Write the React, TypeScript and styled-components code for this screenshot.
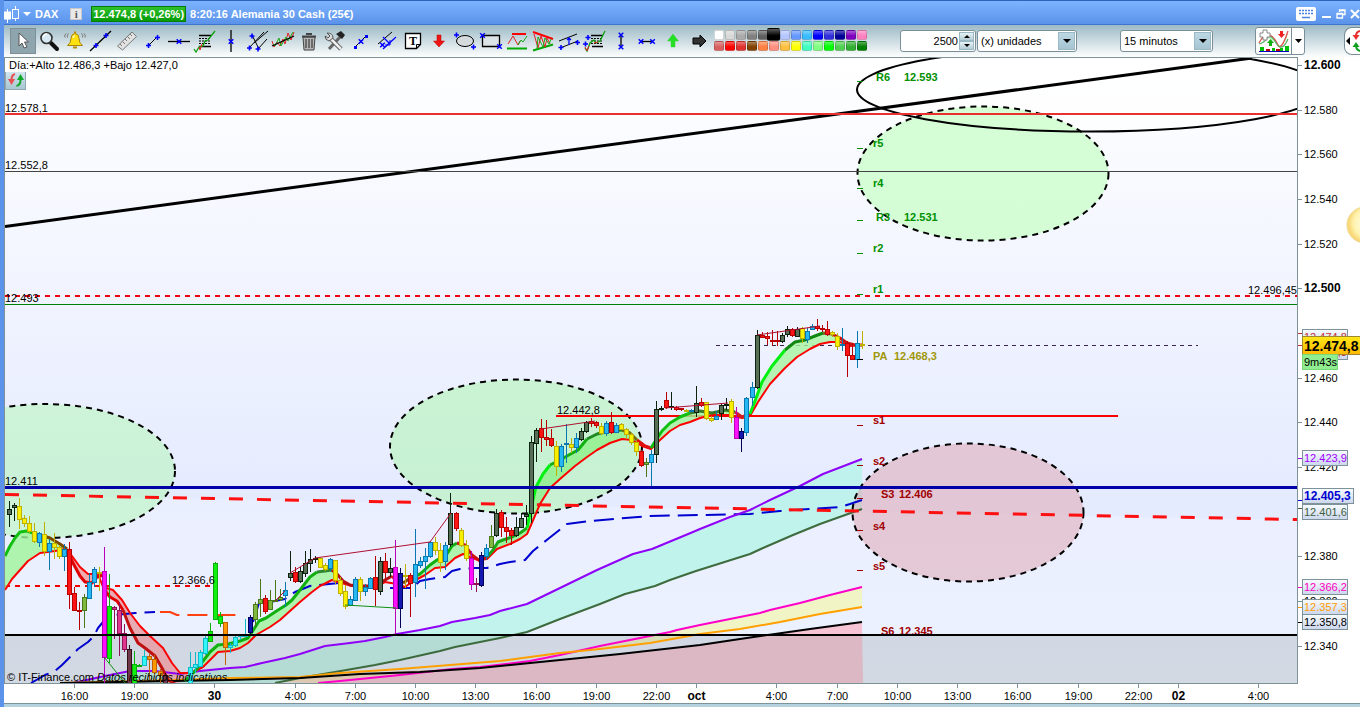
import React from "react";
import styled, { createGlobalStyle } from "styled-components";

const GlobalStyle = createGlobalStyle`
  *, *::before, *::after { box-sizing: border-box; }
  body { margin: 0; background: #fff; font-family: "Liberation Sans", Arial, sans-serif; font-size: 11px; color: #000; }
  button, input, select { font: inherit; color: inherit; }
`;

/* ---------- window frame ---------- */

const Window = styled.main`
  display: flex;
  flex-direction: column;
  min-height: 100vh;
  border-left: 4px solid #5b93ea;
  overflow: hidden;
  background: #fff;
`;

const TitleBar = styled.header`
  display: flex;
  align-items: center;
  height: 25px;
  padding: 2px 0 0;
  border-top: 1px solid #2f62bd;
  border-bottom: 1px solid #3d74cf;
  background: linear-gradient(#7db4ff, #5a92ea);
  color: #fff;
  font-weight: bold;
`;

const TitleMenu = styled.button`
  display: flex;
  align-items: center;
  gap: 4px;
  padding: 0;
  border: 0;
  background: none;
  font-weight: bold;
`;

const InfoButton = styled.button`
  width: 12px;
  height: 12px;
  margin: 0 9px 0 12px;
  padding: 0;
  border: 1px solid #c9c9c9;
  background: #e9e9e9;
  color: #555;
  font: bold 11px/10px "Liberation Serif", serif;
`;

const Quote = styled.span`
  height: 16px;
  padding: 0 1px;
  border: 1px solid #067d06;
  background: linear-gradient(#2fc02f, #059a05);
  line-height: 14px;
`;

const Instrument = styled.span`
  margin-left: 4px;
  flex: 1;
`;

const WindowButtons = styled.div`
  display: flex;
  align-items: center;
  gap: 4px;
`;

const WindowButton = styled.button`
  display: flex;
  padding: 0;
  border: 0;
  background: none;
`;

/* ---------- toolbar ---------- */

const Toolbar = styled.div`
  display: flex;
  align-items: center;
  height: 32px;
  padding-left: 6px;
  background: linear-gradient(#9dbac6, #c3d5dc 40%, #fbfdfd 98%);
`;

const ToolButton = styled.button<{ $active?: boolean }>`
  display: flex;
  align-items: center;
  justify-content: center;
  flex: none;
  width: 26px;
  height: 26px;
  padding: 0;
  border: ${(p) => (p.$active ? "1px solid #7d8f97" : "0")};
  background: ${(p) => (p.$active ? "#8fa5ae" : "none")};
`;

const Palette = styled.div`
  display: grid;
  grid-template-columns: repeat(14, 11px);
  grid-auto-rows: 11px;
  width: 154px;
  margin-left: 2px;
`;

const Swatch = styled.button<{ $color: string; $selected?: boolean }>`
  width: ${(p) => (p.$selected ? 13 : 10)}px;
  height: ${(p) => (p.$selected ? 13 : 10)}px;
  margin: ${(p) => (p.$selected ? "-2px" : "0")};
  padding: 0;
  border: 1px solid rgba(0, 0, 0, 0.16);
  border-radius: 2px;
  background: linear-gradient(rgba(255, 255, 255, 0.35), rgba(255, 255, 255, 0) 60%), ${(p) => p.$color};
`;

const Field = styled.label<{ $width: number; $gap: number }>`
  display: flex;
  align-items: center;
  flex: none;
  width: ${(p) => p.$width}px;
  height: 22px;
  margin-left: ${(p) => p.$gap}px;
  padding: 1px;
  border: 1px solid #7a8f99;
  border-radius: 3px;
  background: #fff;
`;

const CountInput = styled.input`
  flex: 1;
  min-width: 0;
  padding: 0 1px;
  border: 0;
  outline: 0;
  background: none;
  text-align: right;
`;

const Spinner = styled.span`
  display: flex;
  flex-direction: column;
  width: 15px;
  height: 18px;
`;

const SpinButton = styled.button`
  display: flex;
  align-items: center;
  justify-content: center;
  height: 9px;
  padding: 0;
  border: 1px solid #9bb8c5;
  background: linear-gradient(#e8f2f6, #b4ccd6);
`;

const Dropdown = styled.select`
  flex: 1;
  min-width: 0;
  padding: 0 2px;
  border: 0;
  outline: 0;
  appearance: none;
  background: none;
`;

const DropMark = styled.span`
  display: flex;
  align-items: center;
  justify-content: center;
  width: 17px;
  height: 18px;
  background: linear-gradient(#bcd8e4, #a6c4d2);
  border: 1px solid #9bb8c5;
`;

const IndicatorGroup = styled.div`
  display: flex;
  flex: none;
  width: 50px;
  height: 28px;
  margin-left: 42px;
  border: 1px solid #7a8f99;
  border-radius: 3px;
  background: #fff;
`;

const IndicatorButton = styled.button<{ $width: number }>`
  display: flex;
  align-items: center;
  justify-content: center;
  width: ${(p) => p.$width}px;
  padding: 0;
  border: 0;
  background: none;
  & + & { border-left: 1px solid #7a8f99; }
`;

const SidePanelButton = styled.button`
  display: flex;
  align-items: center;
  flex: none;
  width: 16px;
  height: 28px;
  margin-left: auto;
  padding: 0;
  border: 1px solid #7a8f99;
  border-right: 0;
  border-radius: 8px 0 0 8px;
  background: #fff;
`;

/* ---------- chart ---------- */

const ChartPanel = styled.section`
  position: relative;
  flex: 1;
`;

const ChartSvg = styled.svg`
  display: block;
  width: 100%;
  height: auto;
  font-family: "Liberation Sans", Arial, sans-serif;
  font-size: 11px;
`;

const DayRange = styled.div`
  position: absolute;
  top: 2px;
  left: 5px;
  line-height: 13px;
`;

const RefreshButton = styled.button`
  position: absolute;
  top: 15px;
  left: 1px;
  width: 21px;
  height: 18px;
  padding: 0;
  border: 1px solid #8fa9b3;
  border-top: 0;
  background: linear-gradient(#d3e6ee, #a9c6d2);
`;

const StatusEdge = styled.footer`
  height: 4px;
  border-top: 1px solid #7d9299;
  background: #b4d2dd;
`;

/* ---------- tool icons ---------- */

const BLUE = "#0000ff";
const Plus = ({ x, y }: { x: number; y: number }) => (
  <path d={`M${x - 2.5} ${y}h5M${x} ${y - 2.5}v5`} stroke={BLUE} strokeWidth="1.6" />
);
const Cross = ({ x, y }: { x: number; y: number }) => (
  <path d={`M${x - 2.3} ${y - 2.3}l4.600 4.600M${x + 2.3} ${y - 2.3}l-4.600 4.600`} stroke={BLUE} strokeWidth="1.5" />
);

const tools: { name: string; icon: React.ReactNode }[] = [
  { name: "Cursor", icon: <path d="M8 4v13l3-3 2 5 3-1-2.500-5h4z" fill="#fff" stroke="#555" /> },
  {
    name: "Zoom",
    icon: (
      <>
        <path d="M14 14l6 6" stroke="#111" strokeWidth="4" strokeLinecap="round" />
        <circle cx="9.500" cy="9" r="5.500" fill="#d7e9f2" stroke="#333" strokeWidth="1.600" />
        <path d="M6 8q1-3 4-3" stroke="#fff" strokeWidth="1.500" fill="none" />
      </>
    ),
  },
  {
    name: "Alert",
    icon: (
      <>
        <path d="M4.500 16.500Q8 14 8 9.500 8 5 12 4.500 16 5 16 9.500 16 14 19.500 16.500z" fill="#ffe010" stroke="#a88400" />
        <path d="M10 9q0-2 2-2.500" stroke="#fff8b0" strokeWidth="1.500" />
        <path d="M10 18.500h4M11 3.500h2" stroke="#b78c00" strokeWidth="2" />
        <path d="M5.500 4.500q-2 2-1 4M3 4.500q-2 1.500-1 4M18.500 4.500q2 2 1 4M21 4.500q2 1.500 1 4" stroke="#777" />
      </>
    ),
  },
  { name: "Trend line", icon: <><path d="M1 22L22 2" stroke="#000" strokeWidth="1.300" /><Plus x={7} y={16.500} /><Plus x={17} y={6.500} /></> },
  {
    name: "Ruler",
    icon: (
      <>
        <path d="M2.500 17L17 3l4.500 4.500L7.500 21z" fill="#e2e2e2" stroke="#777" />
        <path d="M5 15l2 2M7.500 12.500l2.500 2.500M10 10l2 2M12.500 7.500l2.500 2.500M15 5l2 2" stroke="#777" />
      </>
    ),
  },
  { name: "Segment", icon: <><path d="M8 16l8-8" stroke="#000" /><Plus x={7.500} y={16.500} /><Plus x={16.500} y={8.500} /></> },
  { name: "Horizontal line", icon: <><path d="M1 12.500h22" stroke="#000" strokeWidth="1.300" /><Cross x={12} y={12.500} /></> },
  {
    name: "Fibonacci",
    icon: (
      <>
        <path d="M6 6.500h12M6 17.500h12" stroke="#000" strokeWidth="1.300" />
        <path d="M6 9.500h11M6 12h11M6 14.500h11" stroke="#000" strokeDasharray="2 1" />
        <path d="M1 20l2 3 3-5 4-1 2-5 3-1 7-9" stroke="#0aa00a" strokeWidth="1.300" />
        <path d="M6 18l1 3 2-6" stroke="#e02020" />
      </>
    ),
  },
  { name: "Vertical line", icon: <><path d="M12 1v22" stroke="#000" strokeWidth="1.300" /><Cross x={12} y={12.500} /></> },
  {
    name: "Pitchfork",
    icon: (
      <>
        <path d="M4 19L19 3M9 14L23 2M13 20L22 10M7 6l7 14" stroke="#000" />
        <Plus x={4.500} y={19} /><Plus x={7} y={7} /><Plus x={13} y={20} />
      </>
    ),
  },
  {
    name: "Regression",
    icon: (
      <>
        <path d="M1 12l2 6 3-5 3 4 3-7 2 5 3-11 3 7 3-8" stroke="#e02020" />
        <path d="M2 15l2 2 4-8 2 8 5-9 2 4 5-9" stroke="#19a819" />
        <path d="M1 17L23 7" stroke="#000" strokeWidth="1.300" />
      </>
    ),
  },
  {
    name: "Delete",
    icon: (
      <>
        <path d="M6 8h12l-1 13H7z" fill="#b5b5b5" stroke="#444" />
        <path d="M9 10v9M12 10v9M15 10v9" stroke="#444" strokeWidth="1.300" />
        <path d="M5 7.500h14M9 5h6" stroke="#444" strokeWidth="2" />
      </>
    ),
  },
  {
    name: "Settings",
    icon: (
      <>
        <path d="M6 20L17 8" stroke="#666" strokeWidth="3" />
        <path d="M13 5l5-3 4 4-3 4z" fill="#222" />
        <path d="M7 9l11 11" stroke="#555" strokeWidth="4.500" />
        <path d="M7 9l11 11" stroke="#eee" strokeWidth="2.500" />
        <path d="M4 4l3 3-2 2-3-2q0 4 4 5l4-3q0-5-6-5z" fill="#ddd" stroke="#555" />
      </>
    ),
  },
  {
    name: "Measure",
    icon: (
      <>
        <path d="M6 18L17 7" stroke="#000" />
        <path d="M5 17h3v3H5zM16 6h3v3h-3z" fill={BLUE} />
        <Cross x={12} y={12.500} />
      </>
    ),
  },
  {
    name: "Parallel",
    icon: (
      <>
        <path d="M3 15L17 3" stroke="#000" />
        <path d="M8 20L21 8M8 8l7 7" stroke={BLUE} strokeWidth="1.300" />
        <path d="M15 11v5h-5" stroke={BLUE} />
        <Cross x={7.500} y={16} />
      </>
    ),
  },
  {
    name: "Text",
    icon: (
      <>
        <path d="M4.500 4.500h15v11l-4 4h-11z" fill="#fff" stroke="#000" strokeWidth="1.300" />
        <path d="M15.500 19.500v-4h4" stroke="#000" />
        <text x="12" y="16" fill="#000" fontFamily="Liberation Serif, serif" fontSize="12" fontWeight="bold" textAnchor="middle">T</text>
      </>
    ),
  },
  { name: "Down arrow", icon: <path d="M10 6h4v6h3.500L12 18l-5.500-6H10z" fill="#f01515" stroke="#b00" strokeWidth=".5" /> },
  { name: "Ellipse", icon: <><ellipse cx="12" cy="12" rx="8.500" ry="5.500" fill="#d5dadd" stroke="#000" /><Plus x={3.500} y={6} /><Plus x={20.500} y={18} /></> },
  { name: "Rectangle", icon: <><path d="M3.500 6.500h17v11h-17z" fill="#dde4e7" stroke="#000" strokeWidth="1.300" /><Cross x={3.500} y={6.500} /><Cross x={20.500} y={17.500} /></> },
  {
    name: "Support",
    icon: (
      <>
        <path d="M7 5h14" stroke="#f00" strokeWidth="2" /><path d="M2 19.500h20" stroke="#0a0" strokeWidth="2" />
        <path d="M3 15l5-8 5 9 2-4" stroke="#e02020" /><path d="M13 16l3-5 2 2 4-6" stroke="#19a819" />
      </>
    ),
  },
  {
    name: "Triangle",
    icon: (
      <>
        <path d="M2 3l20 7" stroke="#f00" strokeWidth="2" /><path d="M2 21.500l20-6" stroke="#0a0" strokeWidth="2" />
        <path d="M3 5l4 14 3-12 4 11 2-9 3 6" stroke="#e02020" /><path d="M6 20l1-12 5 10 2-9 4 6 2-5" stroke="#19a819" />
      </>
    ),
  },
  {
    name: "Channel",
    icon: (
      <>
        <path d="M2 12l18-7M3 19l18-7" stroke="#000" />
        <Plus x={4} y={18.500} /><Plus x={20.500} y={13.500} />
        <path d="M12 16V9M10 11l2-2 2 2" stroke={BLUE} strokeWidth="1.300" />
      </>
    ),
  },
  {
    name: "Extension",
    icon: (
      <>
        <path d="M8 6.500h12M9 17.500h11" stroke="#000" strokeWidth="1.300" />
        <path d="M8 9.500h12M8 12h12M8 14.500h12" stroke="#000" strokeDasharray="2 1" />
        <path d="M2 19l2 3 3-8 4-3 2 3 4-2 5-10" stroke="#0aa00a" strokeWidth="1.300" />
        <path d="M2 18l2 4 2-5M11 14l4-1" stroke="#e02020" /><Plus x={5} y={8.500} /><Plus x={2.500} y={15} />
      </>
    ),
  },
  { name: "Price range", icon: <><path d="M12 6v12" stroke="#000" strokeWidth="1.300" /><Cross x={12} y={6} /><Cross x={12} y={18} /></> },
  { name: "Time range", icon: <><path d="M6 12.500h11" stroke="#000" strokeWidth="1.300" /><Cross x={6} y={12.500} /><Cross x={17.500} y={12.500} /></> },
  { name: "Up arrow", icon: <path d="M10 18h4v-6h3.500L12 5l-5.500 7H10z" fill="#22e022" stroke="#4c4" strokeWidth=".5" /> },
  { name: "Right arrow", icon: <path d="M6 9h7V6l6 6-6 6v-3H6z" fill="#333" stroke="#000" /> },
];

const palette = [
  "#ffffff", "#d8d8d8", "#aaaaaa", "#808080", "#606060", "#000000", "#b4c6ff", "#6699ff", "#38bcff", "#0000ff", "#3030dd", "#000099", "#8000c0", "#ff80c0",
  "#d86060", "#ff0000", "#e03030", "#804000", "#ff8040", "#ff9080", "#ffc040", "#ffff00", "#40ffc0", "#80ff80", "#00ff00", "#50d050", "#30b030", "#008000",
];

const Triangle = ({ up, small }: { up?: boolean; small?: boolean }) => (
  <svg width={small ? 6 : 8} height={small ? 3 : 4} viewBox="0 0 8 4">
    <path d={up ? "M0 4L4 0l4 4z" : "M0 0h8L4 4z"} fill="#000" />
  </svg>
);

/* ---------- chart data ---------- */

type Candle = [kind: string, high: number, top: number, bottom: number, low: number];

const candleColors: Record<string, [fill: string, stroke: string]> = {
  k: ["#566f56", "#0c220c"],
  y: ["#f8f000", "#c0b000"],
  b: ["#25b8f2", "#0a78b0"],
  r: ["#ff1414", "#b80000"],
  m: ["#ff10ff", "#b800b8"],
  g: ["#10f010", "#08b008"],
  o: ["#ff9800", "#c06000"],
  c: ["#30f8f8", "#10b8c8"],
  v: ["#80b840", "#487818"],
  p: ["#e0388c", "#901058"],
  d: ["#703848", "#301018"],
  n: ["#1418b0", "#000058"],
};

const candles: (Candle | null)[] = [
  ["k", 501, 509, 514, 527], ["k", 503, 505, 507, 521], ["y", 498, 506, 519, 529], ["y", 515, 518, 523, 527], ["y", 516, 523, 531, 533],
  ["y", 523, 531, 541, 543], ["b", 532, 533, 542, 547], ["y", 522, 534, 551, 556], ["b", 539, 543, 551, 570], ["y", 533, 543, 547, 559],
  ["y", 545, 547, 556, 559], ["b", 544, 549, 556, 571], ["r", 542, 549, 594, 609], ["r", 587, 593, 610, 610], ["r", 602, 610, 611, 630],
  ["v", 594, 597, 610, 628], ["b", 573, 582, 598, 599], ["b", 567, 569, 582, 587], ["y", 567, 572, 573, 591], ["m", 547, 571, 657, 683],
  ["g", 574, 606, 658, 663], ["p", 606, 607, 609, 639], ["p", 602, 610, 633, 656], ["p", 624, 633, 649, 652], ["d", 645, 649, 683, 686],
  ["g", 651, 664, 690, 690], ["g", 664, 665, 666, 667], ["c", 650, 656, 665, 666], ["o", 654, 656, 659, 681], ["o", 655, 659, 672, 675],
  ["o", 669, 671, 675, 685], ["d", 673, 675, 685, 690], null, null, null, null,
  ["c", 652, 667, 690, 690], ["c", 652, 664, 667, 673], ["c", 650, 652, 666, 667], ["c", 636, 638, 653, 655], ["g", 623, 631, 641, 641],
  ["g", 562, 563, 619, 619], ["g", 612, 616, 623, 627], ["o", 622, 622, 647, 665], ["c", 643, 645, 647, 653], ["c", 636, 637, 645, 647],
  ["c", 634, 635, 636, 640], ["c", 619, 635, 636, 637], ["n", 615, 617, 632, 634], ["v", 602, 604, 619, 627], ["v", 579, 599, 603, 617],
  ["r", 595, 598, 611, 614], ["v", 590, 600, 609, 610], ["v", 580, 600, 601, 602], ["v", 589, 597, 599, 601], ["b", 582, 590, 595, 607],
  ["k", 551, 573, 577, 581], ["r", 567, 572, 581, 583], ["k", 567, 571, 581, 583], ["k", 551, 563, 573, 577], ["k", 549, 559, 563, 572],
  ["k", 556, 558, 559, 563], ["y", 557, 558, 567, 568], ["y", 563, 565, 569, 571], ["b", 558, 559, 568, 572], ["y", 560, 560, 580, 584],
  ["y", 577, 580, 593, 596], ["y", 585, 591, 606, 609], ["b", 596, 599, 605, 606], ["b", 577, 579, 600, 601], ["y", 577, 579, 591, 601],
  ["b", 584, 587, 591, 596], ["b", 577, 578, 588, 589], ["r", 556, 577, 589, 606], ["k", 557, 561, 591, 595], ["r", 553, 561, 572, 578],
  ["k", 558, 568, 572, 577], ["m", 540, 567, 608, 634], ["n", 568, 573, 608, 628], ["y", 564, 575, 576, 588], ["r", 573, 575, 583, 617],
  ["b", 529, 564, 582, 597], ["b", 557, 561, 565, 568], ["b", 548, 556, 561, 589], ["b", 541, 542, 556, 558], ["y", 537, 542, 550, 555],
  ["y", 543, 550, 562, 572], ["b", 542, 545, 561, 570], ["k", 493, 513, 544, 547], ["r", 512, 513, 528, 531], ["y", 528, 530, 545, 547],
  ["y", 540, 545, 558, 561], ["m", 551, 558, 584, 590], ["p", 578, 583, 584, 592], ["n", 552, 555, 585, 587], ["b", 544, 548, 556, 560],
  ["v", 525, 536, 547, 548], ["k", 509, 513, 535, 537], ["r", 510, 512, 527, 537], ["r", 517, 527, 531, 543], ["r", 528, 530, 535, 545],
  ["k", 517, 527, 535, 537], ["k", 513, 518, 527, 528], ["k", 505, 514, 516, 525], ["k", 436, 442, 513, 523], ["k", 428, 430, 443, 462],
  ["r", 419, 428, 437, 452], ["r", 420, 437, 439, 446], ["r", 429, 438, 445, 447], ["y", 441, 446, 466, 476], ["b", 444, 446, 466, 472],
  ["b", 424, 443, 444, 463], ["y", 438, 444, 447, 453], ["b", 433, 438, 447, 453], ["k", 428, 431, 439, 441], ["k", 421, 422, 431, 433],
  ["r", 418, 421, 423, 427], ["r", 421, 422, 425, 428], ["y", 423, 426, 433, 435], ["b", 421, 423, 433, 436], ["r", 412, 422, 432, 434],
  ["b", 423, 425, 432, 433], ["y", 423, 424, 429, 430], ["y", 428, 429, 434, 439], ["y", 433, 434, 442, 445], ["y", 441, 442, 451, 456],
  ["r", 450, 451, 465, 467], ["v", 458, 462, 464, 477], ["b", 450, 454, 462, 487], ["k", 401, 409, 454, 463], ["k", 406, 408, 409, 411],
  ["r", 392, 400, 407, 409], ["k", 392, 406, 407, 410], ["r", 406, 407, 409, 411], ["r", 408, 408, 409, 411], ["y", 409, 410, 411, 412],
  ["b", 409, 410, 411, 412], ["k", 386, 403, 412, 417], ["r", 398, 402, 405, 407], ["y", 402, 402, 418, 420], ["y", 416, 418, 420, 422],
  ["b", 411, 416, 419, 420], ["k", 403, 405, 413, 420], ["k", 398, 404, 405, 410], ["y", 399, 401, 417, 423], ["m", 407, 417, 438, 439],
  ["n", 428, 431, 438, 452], ["b", 397, 398, 432, 436], ["b", 382, 387, 397, 406], ["k", 330, 335, 387, 389], ["r", 332, 335, 337, 338],
  ["r", 332, 336, 338, 345], ["r", 330, 340, 341, 346], ["r", 331, 340, 341, 346], ["k", 333, 335, 341, 343], ["k", 326, 329, 334, 337],
  ["r", 328, 329, 335, 337], ["k", 327, 329, 336, 337], ["y", 327, 328, 338, 343], ["b", 328, 331, 339, 343], ["b", 324, 326, 329, 330],
  ["r", 319, 326, 328, 331], ["r", 325, 328, 328, 332], ["r", 321, 329, 334, 336], ["y", 331, 332, 334, 337], ["y", 333, 336, 346, 350],
  ["b", 328, 344, 345, 351], ["r", 341, 343, 355, 377], ["r", 343, 355, 359, 360], ["b", 331, 343, 359, 368], ["y", 331, 344, 345, 349],
];

const FIRST_BAR = 9;
const BAR_STEP = 5.017;

const fast = "5,556 10,546 15,538 20,532 27,531 33,533 40,535 50,538 60,544 67,549 73,563 80,576 85,582 92,583 97,577 103,575 106,592 110,597 117,601 123,610 130,628 138,643 145,648 155,656 162,668 168,680 175,684 185,681 195,671 203,661 210,652 218,645 228,644 240,641 248,638 254,629 259,621 266,618 275,612 286,605 292,600 300,590 310,577 317,572 325,571 332,570 337,574 343,581 350,585 362,586 375,586 385,580 392,576 397,582 403,583 412,577 420,574 430,565 437,560 445,557 452,546 457,543 465,545 472,555 480,561 487,557 493,550 498,542 503,540 512,537 520,533 527,528 530,513 533,500 536,487 543,474 550,465 560,460 567,456 578,450 587,439 597,434 610,431 622,430 630,433 637,440 645,446 651,448 656,440 662,431 670,423 680,417 690,413 700,411 712,413 725,410 735,412 742,417 750,414 755,401 762,382 772,366 785,350 795,342 805,340 815,336 823,333 832,334 840,338 847,343 855,345 862,345";
const slow = "5,590 12,579 20,570 28,561 40,553 55,551 65,549 72,556 80,567 88,574 98,574 103,587 113,590 122,600 130,613 140,626 150,636 163,648 172,663 180,673 188,673 195,671 203,667 210,660 218,652 230,651 240,648 248,643 256,635 270,627 280,620 290,611 300,602 312,592 320,586 332,580 345,584 352,586 375,587 385,582 397,584 405,587 412,582 425,575 435,568 445,567 455,558 463,554 470,557 478,560 487,559 497,549 510,544 520,539 527,534 531,525 540,504 550,488 560,479 575,466 587,457 597,450 610,443 622,439 632,440 642,446 651,449 660,440 670,431 680,425 690,422 700,418 712,415 730,415 742,418 750,416 758,402 770,384 785,368 797,357 810,349 820,344 830,342 840,342 850,346 862,345";

const between = (line: string, from: number, to: number) =>
  line.split(" ").filter((p) => {
    const x = Number(p.split(",")[0]);
    return x >= from && x <= to;
  });

const band = (from: number, to: number) =>
  [...between(fast, from, to), ...between(slow, from, to).reverse()].join(" ");

const ribbons: [from: number, to: number, color: string][] = [
  [5, 72, "#a0f59a"], [72, 98, "#f09a9a"], [103, 188, "#e89aa0"], [195, 337, "#a0f59a"], [412, 472, "#a0f59a"],
  [487, 642, "#8ff088"], [651, 735, "#a0f59a"], [750, 850, "#a8f4a0"],
];

const fastSegments: [from: number, to: number, color: string][] = [
  [5, 40, "#10c010"], [40, 67, "#7a4a00"], [67, 123, "#e00000"], [123, 175, "#c01010"], [185, 317, "#10b010"],
  [317, 332, "#308830"], [332, 392, "#b01010"], [392, 403, "#e02020"], [403, 412, "#804010"], [412, 457, "#10b010"], [457, 487, "#d01010"],
  [487, 527, "#18a818"], [527, 550, "#00f010"], [550, 587, "#10b010"], [587, 622, "#208820"], [622, 637, "#707010"],
  [637, 651, "#e01010"], [651, 690, "#10c010"], [690, 735, "#387828"], [735, 750, "#d02020"], [750, 785, "#00f010"],
  [785, 823, "#108810"], [823, 832, "#706010"], [832, 862, "#d01010"],
];

const purple = "73,683 105,676 130,671 155,671 180,674 200,671 230,668 245,667 262,663 285,658 300,654 325,646 350,643 365,641 385,637 397,634 420,630 440,626 452,622 475,618 490,615 500,611 527,604 560,588 597,570 633,554 652,549 693,532 700,529 730,517 750,510 770,500 800,486 823,474 862,459";
const forest = "275,683 300,678 335,672 375,665 400,660 440,651 455,647 500,638 527,632 560,619 600,604 625,594 655,586 670,580 696,571 750,554 763,548 793,535 820,524 862,509";
const magenta = "318,683 340,681 400,675 452,669 480,667 530,661 560,655 600,646 640,638 670,632 677,630 700,625 760,613 770,610 800,603 830,595 862,587";
const orange = "60,683 180,680 230,678 300,677 340,673 400,669 450,665 500,661 530,657 560,653 600,649 650,643 700,634 740,629 780,622 820,614 862,607";
const black = "60,683 230,680 300,678 360,674 420,672 480,668 530,663 560,660 620,654 700,645 740,639 775,634 810,629 862,622";
const reverse = (line: string) => line.split(" ").reverse().join(" ");

const pivots: { label: string; value?: string; x: number; y: number; tick: number; color: string }[] = [
  { label: "R6", value: "12.593", x: 876, y: 81, tick: 81, color: "#009000" },
  { label: "r5", x: 873, y: 147, tick: 148, color: "#009000" },
  { label: "r4", x: 873, y: 187, tick: 188, color: "#009000" },
  { label: "R3", value: "12.531", x: 876, y: 221, tick: 220, color: "#009000" },
  { label: "r2", x: 873, y: 252, tick: 253, color: "#009000" },
  { label: "r1", x: 873, y: 293, tick: 294, color: "#009000" },
  { label: "PA", value: "12.468,3", x: 873, y: 360, tick: 359, color: "#a0980a" },
  { label: "s1", x: 873, y: 424, tick: 425, color: "#a00000" },
  { label: "s2", x: 873, y: 465, tick: 465, color: "#a00000" },
  { label: "S3", value: "12.406", x: 881, y: 498, tick: 498, color: "#a00000" },
  { label: "s4", x: 873, y: 530, tick: 530, color: "#a00000" },
  { label: "s5", x: 873, y: 570, tick: 570, color: "#a00000" },
  { label: "S6", value: "12.345", x: 881, y: 635, tick: 635, color: "#a00000" },
];
const valueOffset: Record<string, number> = { R6: 28, R3: 28, PA: 21, S3: 18, S6: 18 };

const prices: [label: string, y: number, strong?: boolean][] = [
  ["12.600", 65, true], ["12.580", 110], ["12.560", 154], ["12.540", 199], ["12.520", 244], ["12.500", 288, true],
  ["12.460", 378], ["12.440", 422], ["12.420", 467], ["12.380", 556], ["12.360", 601], ["12.340", 646],
];

const times: [label: string, x: number, strong?: boolean][] = [
  ["16:00", 74.5], ["19:00", 134.5], ["30", 214.5, true], ["4:00", 295.5], ["7:00", 355.5], ["10:00", 415.5], ["13:00", 475.5],
  ["16:00", 536.5], ["19:00", 596.5], ["22:00", 656.5], ["oct", 696.5, true], ["4:00", 776.5], ["7:00", 837.5], ["10:00", 897.5],
  ["13:00", 957.5], ["16:00", 1017.5], ["19:00", 1078.5], ["22:00", 1138.5], ["02", 1178.5, true], ["4:00", 1258.5],
];

const tags: { label: string; y: number; color: string; strong?: boolean; tick: number }[] = [
  { label: "12.474,8", y: 329, color: "#c03030", tick: 333 },
  { label: "12.468,3", y: 344, color: "#c03030", tick: 345 },
  { label: "12.423,9", y: 450, color: "#a000ff", tick: 458 },
  { label: "12.401,6", y: 504, color: "#406040", tick: 508 },
  { label: "12.405,3", y: 488, color: "#0000d0", strong: true, tick: 500 },
  { label: "12.366,2", y: 579, color: "#ff00c0", tick: 587 },
  { label: "12.357,3", y: 599, color: "#ff9c00", tick: 607 },
  { label: "12.350,8", y: 614, color: "#000000", tick: 622 },
];

const Dashed = styled.ellipse`
  stroke: #000;
  stroke-width: 2;
  stroke-dasharray: 6 5;
`;

const Line = styled.polyline<{ $color: string; $width?: number }>`
  fill: none;
  stroke: ${(p) => p.$color};
  stroke-width: ${(p) => p.$width ?? 2};
  stroke-linejoin: round;
`;

function Candles() {
  return (
    <g shapeRendering="crispEdges">
      {candles.map((c, i) => {
        if (!c) return null;
        const [kind, high, top, bottom, low] = c;
        const x = Math.round(FIRST_BAR + i * BAR_STEP);
        const [fill, stroke] = candleColors[kind];
        return (
          <g key={i} stroke={stroke}>
            <line x1={x + 0.5} x2={x + 0.5} y1={high} y2={low} />
            <rect x={x - 1.5} y={top + 0.5} width="4" height={Math.max(bottom - top, 1)} fill={fill} />
          </g>
        );
      })}
    </g>
  );
}

function Chart() {
  return (
    <ChartSvg viewBox="4 57 1356 646" role="img" aria-label="DAX, 15 minutos">
      <defs>
        <linearGradient id="sky" x1="0" y1="0" x2="0" y2="1">
          <stop offset="0" stopColor="#ffffff" />
          <stop offset="0.7" stopColor="#e5ebff" />
          <stop offset="1" stopColor="#e9efff" />
        </linearGradient>
        <linearGradient id="tag" x1="0" y1="0" x2="0" y2="1">
          <stop offset="0" stopColor="#f8fcff" />
          <stop offset="1" stopColor="#ccd6ee" />
        </linearGradient>
        <linearGradient id="last" x1="0" y1="0" x2="0" y2="1">
          <stop offset="0" stopColor="#ffe818" />
          <stop offset="1" stopColor="#ffb800" />
        </linearGradient>
        <radialGradient id="sun" cx="0.6" cy="0.45" r="0.55">
          <stop offset="0" stopColor="#fffff0" />
          <stop offset="0.75" stopColor="#fff3b0" />
          <stop offset="1" stopColor="#f8d878" />
        </radialGradient>
        <clipPath id="plot"><rect x="5" y="58" width="1292" height="625" /></clipPath>
      </defs>

      <rect x="5" y="58" width="1292" height="625" fill="url(#sky)" />

      <g clipPath="url(#plot)">
        <polygon points="5,495 1297,520 1297,635 5,635" fill="#fff" fillOpacity=".2" />
        <polygon points={`${purple} ${reverse(forest)}`} fill="#a8f5e2" fillOpacity=".62" />
        <polygon points={`560,655 ${between(magenta, 600, 862).join(" ")} ${between(orange, 600, 862).reverse().join(" ")}`} fill="#f2f6b8" fillOpacity=".8" />
        <polygon points="275,682 300,678 400,671 480,668 340,681 318,683" fill="#ffc890" fillOpacity=".6" />
        <polygon points={`318,683 ${between(black, 420, 862).join(" ")} 863,683`} fill="#fbaec0" fillOpacity=".68" />
        <rect x="5" y="636" width="1292" height="47" fill="#90988f" fillOpacity=".25" />

        <ellipse cx="1090" cy="89.500" rx="233" ry="42" fill="#fff" fillOpacity=".5" />
        <Dashed cx="45" cy="471" rx="130" ry="67" fill="#b4f5b8" fillOpacity=".55" />
        <Dashed cx="516" cy="446.500" rx="126" ry="67" fill="#b4f5b8" fillOpacity=".6" />
        <Dashed cx="983" cy="173.500" rx="125.500" ry="67" fill="#c6ffc4" fillOpacity=".7" />
        <Dashed cx="968" cy="512.500" rx="115.500" ry="69" fill="#dea4b0" fillOpacity=".52" />
        <ellipse cx="1090" cy="89.500" rx="233" ry="42" fill="none" stroke="#000" strokeWidth="2" />

        <path d="M5 226.500L1252 58" stroke="#000" strokeWidth="3" />
        <g shapeRendering="crispEdges">
          <path d="M5 114h1292" stroke="#ea2f2f" strokeWidth="2" />
          <path d="M5 171.500h1292" stroke="#444" />
          <path d="M5 304.500h1292" stroke="#008000" />
          <path d="M5 296h1292" stroke="#f00010" strokeWidth="2" strokeDasharray="5 5" />
          <path d="M716 345.500h482" stroke="#402050" strokeDasharray="4 4" />
          <path d="M556 416h562" stroke="#f80000" strokeWidth="2" />
          <path d="M5 586h207" stroke="#f00000" strokeWidth="2" strokeDasharray="5 5" />
        </g>

        {ribbons.map(([from, to, color]) => <polygon key={from} points={band(from, to)} fill={color} fillOpacity=".8" />)}

        <g strokeDasharray="20 8">
          <Line $color="#0000d0" points="31,683 45,675 55,671 62,665 70,657 78,649 88,642 94,636 98,628 103,622 113,615 125,614 135,613 155,612" />
          <Line $color="#ff4010" points="160,612 170,612 177,615 240,615" />
          <Line $color="#0000d0" points="253,622 259,603 270,602 285,599 295,592 310,586 340,583" />
          <Line $color="#0000d0" points="390,588 412,588 420,581 430,579 445,577 452,571 460,569 475,568 487,568 500,564 510,562 525,560 533,551 548,539 567,524 590,521 650,516 700,515 750,514 780,511 840,507 850,504 862,500" />
        </g>

        <Line $color="#8f00f8" points={purple} />
        <Line $color="#3d6b3d" points={forest} />
        <Line $color="#ff00c8" points={magenta} />
        <Line $color="#ffa000" points={orange} />
        <Line $color="#000" points={black} />

        <Line $color="#ff0000" points={slow} />
        {fastSegments.map(([from, to, color]) => (
          <Line key={from} $color={color} $width={3} points={between(fast, from, to).join(" ")} />
        ))}

        <Candles />

        <g fill="none" stroke="#b01030">
          <path d="M275 601L285 591M290 573L315 558 430 542 451 513M541 429L595 421M665 408L728 403M757 335L820 326" />
          <path d="M345 605L396 608M104 657L125 683" stroke="#109010" />
        </g>

        <path d="M5 487.500h1292" stroke="#0000a8" strokeWidth="3" shapeRendering="crispEdges" />
        <path d="M5 494.500L1297 519.500" stroke="#ff1010" strokeWidth="3" strokeDasharray="14 14" />

        <g fill="#000">
          <text x="5" y="112">12.578,1</text>
          <text x="5" y="169">12.552,8</text>
          <text x="5" y="302">12.493</text>
          <text x="5" y="485">12.411</text>
          <text x="557" y="414">12.442,8</text>
          <text x="172" y="584">12.366,6</text>
          <text x="1248" y="294">12.496,45</text>
          <text x="7" y="681">© IT-Finance.com</text>
          <text x="97" y="681" fontStyle="italic">Datos recibidos indicativos</text>
        </g>

        {pivots.map((p) => (
          <g key={p.label} fill={p.color} fontWeight="bold">
            <text x={p.x} y={p.y}>{p.label}</text>
            {p.value && <text x={p.x + valueOffset[p.label]} y={p.y}>{p.value}</text>}
            <path d={`M857 ${p.tick + 0.5}h6`} stroke={p.label === "PA" ? "#000" : p.color} />
          </g>
        ))}
        <path d="M5 635h1292" stroke="#000" strokeWidth="2" shapeRendering="crispEdges" />
      </g>

      <path d="M4.500 683V57.500H1297.500V683.500H4" fill="none" stroke="#7d9299" shapeRendering="crispEdges" />

      {prices.map(([label, y, strong]) => (
        <g key={label}>
          <path d={`M1298 ${y + 0.5}h4`} stroke="#7d9299" />
          <text x="1304" y={y + 4} fontWeight={strong ? "bold" : "normal"} fontSize={strong ? 12 : 11}>{label}</text>
        </g>
      ))}
      {tags.map((t) => (
        <g key={t.label}>
          <path d={`M1298 ${t.tick + 0.5}h5`} stroke={t.color} />
          <rect x="1302.500" y={t.y + 0.5} width={t.strong ? 51 : 45} height="15" fill="url(#tag)" stroke="#7d9299" />
          <text x="1304" y={t.y + 12} fill={t.color} fontSize={t.strong ? 12 : 11} fontWeight={t.strong ? "bold" : "normal"}>{t.label}</text>
        </g>
      ))}
      <rect x="1302.500" y="336.500" width="60" height="18" fill="url(#last)" stroke="#a08830" />
      <text x="1304" y="351" fontSize="14" fontWeight="bold">12.474,8</text>
      <rect x="1302.500" y="354.500" width="35" height="15" fill="#90ee90" stroke="#78d878" />
      <text x="1304" y="366">9m43s</text>

      {times.map(([label, x, strong]) => (
        <g key={x} textAnchor="middle">
          <path d={`M${x} 684v4`} stroke="#7d9299" />
          <text x={x} y="700" fontWeight={strong ? "bold" : "normal"} fontSize={strong ? 12 : 11}>{label}</text>
        </g>
      ))}

      <circle cx="1365" cy="225" r="18" fill="url(#sun)" stroke="#f0d890" />
    </ChartSvg>
  );
}

export default function App() {
  return (
    <>
      <GlobalStyle />
      <Window>
        <TitleBar>
          <TitleMenu>
            <svg width="15" height="18" viewBox="0 0 15 18" fill="none" stroke="#fff">
              <path d="M3.500 4v14M11.500 1v15" />
              <rect x=".5" y="7" width="6" height="7" fill="#fff" />
              <rect x="8.500" y="4.500" width="6" height="9" fill="#6da4f6" />
            </svg>
            <svg width="8" height="4" viewBox="0 0 8 4"><path d="M0 0h8L4 4z" fill="#fff" /></svg>
            DAX
          </TitleMenu>
          <InfoButton aria-label="Info">i</InfoButton>
          <Quote>12.474,8 (+0,26%)</Quote>
          <Instrument>8:20:16 Alemania 30 Cash (25€)</Instrument>
          <WindowButtons>
            <WindowButton aria-label="Teclado">
              <svg width="20" height="14" viewBox="0 0 20 14">
                <rect width="20" height="14" rx="2" fill="#fff" />
                <path d="M3 3.500h14M3 6.500h14" stroke="#4a84e0" strokeWidth="1.500" strokeDasharray="2 1" />
                <path d="M6 10.500h8" stroke="#4a84e0" strokeWidth="1.500" />
              </svg>
            </WindowButton>
            <WindowButton aria-label="Minimizar">
              <svg width="12" height="12" viewBox="0 0 12 12"><path d="M2 9h9" stroke="#fff" strokeWidth="2" /></svg>
            </WindowButton>
            <WindowButton aria-label="Restaurar">
              <svg width="10" height="10" viewBox="0 0 10 10" fill="none" stroke="#fff" strokeWidth="1.300">
                <path d="M3.500 3V1h5.500v4.500H7M3.500 1.500H9" />
                <path d="M1 4.500h5.500V9H1zM1 5h5.500" />
              </svg>
            </WindowButton>
            <WindowButton aria-label="Cerrar">
              <svg width="10" height="10" viewBox="0 0 10 10"><path d="M1 1l8 8M9 1L1 9" stroke="#fff" strokeWidth="2" /></svg>
            </WindowButton>
          </WindowButtons>
        </TitleBar>

        <Toolbar role="toolbar">
          {tools.map((t, i) => (
            <ToolButton key={t.name} aria-label={t.name} $active={i === 0}>
              <svg width="24" height="24" viewBox="0 0 24 24" fill="none">{t.icon}</svg>
            </ToolButton>
          ))}
          <Palette>
            {palette.map((c) => (
              <Swatch key={c} $color={c} $selected={c === "#000000"} aria-label={c} />
            ))}
          </Palette>
          <Field $width={76} $gap={32}>
            <CountInput defaultValue="2500" aria-label="Cantidad" />
            <Spinner>
              <SpinButton aria-label="Más"><Triangle up small /></SpinButton>
              <SpinButton aria-label="Menos"><Triangle small /></SpinButton>
            </Spinner>
          </Field>
          <Field $width={100} $gap={1}>
            <Dropdown defaultValue="u" aria-label="Unidad"><option value="u">(x) unidades</option></Dropdown>
            <DropMark><Triangle /></DropMark>
          </Field>
          <Field $width={93} $gap={43}>
            <Dropdown defaultValue="15" aria-label="Intervalo"><option value="15">15 minutos</option></Dropdown>
            <DropMark><Triangle /></DropMark>
          </Field>
          <IndicatorGroup>
            <IndicatorButton $width={35} aria-label="Indicadores">
              <svg width="32" height="24" viewBox="0 0 32 24" fill="none">
                <path d="M1 14Q7 3 12 6t8 10 10-14q0 8-4 12t-8 0T9 9 1 14z" fill="#c8eec8" />
                <path d="M1 14Q7 3 12 6t8 10 10-14" stroke="#e05050" strokeWidth="1.300" />
                <path d="M1 15q5-1 8-6t9 5 12-4" stroke="#50b060" strokeWidth="1.200" />
                <path d="M5 1h4v3h3v4H9v3H5V8H2V4h3z" fill="#fff" stroke="#888" />
                <path d="M22 2h3v3h2l-3.500 4L20 5h2z" fill="#f02020" />
                <path d="M11 17h3v-3h2l-3.500-4L9 14h2z" fill="#10b010" />
                <path d="M1 22.500h30" stroke="#0000c0" />
                <path d="M2 18h4v4H2zM14 19h3v3h-3zM22 19h3v3h-3zM27 17h4v5h-4z" fill="#00c000" />
                <path d="M8 20h4v2H8zM18 20h4v2h-4z" fill="#c00000" />
              </svg>
            </IndicatorButton>
            <IndicatorButton $width={13} aria-label="Más indicadores">
              <svg width="7" height="4" viewBox="0 0 7 4"><path d="M0 0h7L3.500 4z" /></svg>
            </IndicatorButton>
          </IndicatorGroup>
          <SidePanelButton aria-label="Panel lateral">
            <svg width="15" height="24" viewBox="0 0 15 24" fill="none">
              <path d="M5 8v8l-4-4z" fill="#000" />
              <path d="M15 2q-4 1-4 5" stroke="#e83030" strokeWidth="2" />
              <path d="M7.500 6h7L11 11z" fill="#e83030" />
              <path d="M11 16q0 5 4 6" stroke="#10a020" strokeWidth="2" />
              <path d="M7.500 18h7L11 13z" fill="#10a020" />
            </svg>
          </SidePanelButton>
        </Toolbar>

        <ChartPanel>
          <Chart />
          <DayRange>Día:+Alto 12.486,3 +Bajo 12.427,0</DayRange>
          <RefreshButton aria-label="Invertir posición">
            <svg width="18" height="16" viewBox="0 0 18 16" fill="none">
              <path d="M8 2Q4.500 3 4.500 8" stroke="#e85050" strokeWidth="2" />
              <path d="M1 7h7l-3.500 6z" fill="#e85050" />
              <path d="M9.500 14q4-1 4-6" stroke="#10a828" strokeWidth="2" />
              <path d="M10 8h7l-3.500-6z" fill="#10a828" />
            </svg>
          </RefreshButton>
        </ChartPanel>
        <StatusEdge />
      </Window>
    </>
  );
}
